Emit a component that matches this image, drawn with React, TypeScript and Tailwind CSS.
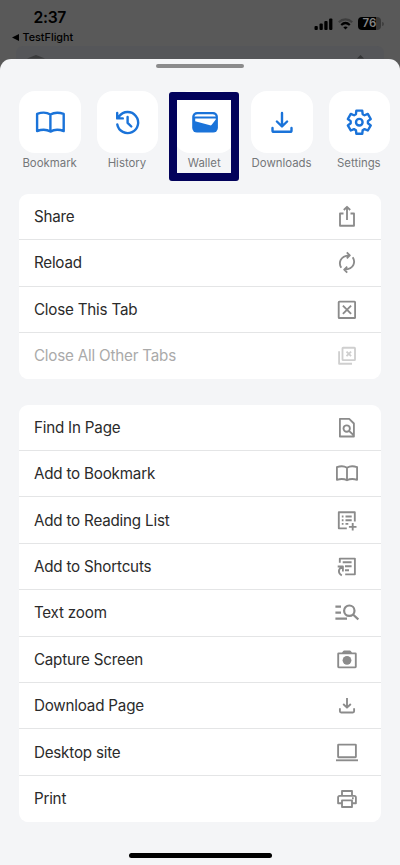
import type { ReactNode } from "react";

const gearPoints = Array.from({ length: 6 }, (_, i) => {
  const base = (i * Math.PI) / 3 - Math.PI / 2;
  return [
    [8.7, -0.4],
    [11.9, -0.25],
    [11.9, 0.25],
    [8.7, 0.4],
  ]
    .map(([r, a]) => `${(16.3 + r * Math.cos(base + a)).toFixed(2)},${(16.2 + r * Math.sin(base + a)).toFixed(2)}`)
    .join(" ");
}).join(" ");

function Big({ children }: { children: ReactNode }) {
  return (
    <svg className="size-8" viewBox="0 0 32 32" fill="none" stroke="#1a73d9" strokeWidth="2.4" strokeLinecap="round" strokeLinejoin="round">
      {children}
    </svg>
  );
}

function Small({ children }: { children: ReactNode }) {
  return (
    <svg className="size-6" viewBox="0 0 24 24" fill="none" stroke="currentColor" strokeWidth="1.85" strokeLinejoin="round">
      {children}
    </svg>
  );
}

const shortcuts: { label: string; icon: ReactNode; marked?: boolean }[] = [
  {
    label: "Bookmark",
    icon: (
      <Big>
        <path d="M16.400 8.600C13 6.400 7.400 6.400 3.100 7.900V25c4.400-1.500 9.900-1.500 13.300.6 3.500-2.100 9-2.100 13.300-.6V7.900C25.400 6.400 19.900 6.400 16.400 8.600ZM16.400 8.600v17" />
      </Big>
    ),
  },
  {
    label: "History",
    icon: (
      <Big>
        <path d="M6.300 18.500A10.500 10.500 0 1 0 8.200 10.300l-1.200 1.900M6.200 7v5.400h5.600M16.600 11v5.800l3.700 3.700" />
      </Big>
    ),
  },
  {
    label: "Wallet",
    marked: true,
    icon: (
      <Big>
        <rect x="3.200" y="6" width="25.700" height="20.600" rx="4.800" fill="#1a73d9" stroke="none" />
        <path d="M5.500 10.400C5.900 8.900 7 8.200 8.500 8.200h15.200c1.500 0 2.600.7 3 2.200Z" fill="#fff" stroke="none" />
        <path d="M6.200 12.500h20c.7 0 .9.600.4 1.200l-3.900 5c-.5.600-1 .8-1.700.6L6.200 15.200Z" fill="#fff" stroke="none" />
      </Big>
    ),
  },
  {
    label: "Downloads",
    icon: (
      <Big>
        <path d="M16 7v13M10.900 15.500 16 20.500l5.100-5M6.500 22v2.400c0 .9.500 1.400 1.400 1.400h16.200c.9 0 1.400-.5 1.400-1.400V22" />
      </Big>
    ),
  },
  {
    label: "Settings",
    icon: (
      <Big>
        <polygon points={gearPoints} />
        <circle cx="16.300" cy="16.200" r="3.300" />
      </Big>
    ),
  },
];

const pageActions: { label: string; icon: ReactNode; disabled?: boolean }[] = [
  {
    label: "Share",
    icon: (
      <Small>
        <path d="M8.500 8.500H5v12.200h14V8.500h-3.500M12 15V1.800M8.800 5 12 1.800 15.200 5" />
      </Small>
    ),
  },
  {
    label: "Reload",
    icon: (
      <Small>
        <path d="M6.300 16.800C3.500 12.500 4.500 5 14.500 4.400M11.800 1.400l3 3-3 3M17.700 6.200C20.500 10.500 19.500 18 9.500 18.600M12.200 21.600l-3-3 3-3" />
      </Small>
    ),
  },
  {
    label: "Close This Tab",
    icon: (
      <Small>
        <rect x="3.700" y="3.600" width="16.400" height="16.400" rx=".6" />
        <path d="m7.900 7.700 8.200 8.200m0-8.200-8.200 8.200" />
      </Small>
    ),
  },
  {
    label: "Close All Other Tabs",
    disabled: true,
    icon: (
      <Small>
        <rect x="7.500" y="3.700" width="12.500" height="12.400" rx=".6" />
        <path d="M4.100 7.200v12.500H17M11.500 7.600l4.600 4.600m0-4.600-4.600 4.600" />
      </Small>
    ),
  },
];

const toolActions: typeof pageActions = [
  {
    label: "Find In Page",
    icon: (
      <Small>
        <path d="M4.900 2.800h9.300l4.700 4.700v13H4.900ZM14 14.800l5 4.700" />
        <circle cx="11.700" cy="12.500" r="3.200" />
      </Small>
    ),
  },
  {
    label: "Add to Bookmark",
    icon: (
      <Small>
        <path d="M12 5.700C9.300 4 5.200 4 1.900 5.100v12.700c3.300-1 7.400-1 10.100.5 2.700-1.500 6.800-1.500 10.100-.5V5.100C18.800 4 14.700 4 12 5.700Zm0 0v12.600" />
      </Small>
    ),
  },
  {
    label: "Add to Reading List",
    icon: (
      <Small>
        <path d="M11.800 19.300h-8v-16h16v9.200M6.800 7.500h1.700M6.800 11.200h1.700M6.800 14.800h1.700M10.500 7.500h6.200M10.500 11.200h6.200M10.500 14.800h2.800M17.700 14v7.600M13.900 17.800h7.600" />
      </Small>
    ),
  },
  {
    label: "Add to Shortcuts",
    icon: (
      <Small>
        <path d="M4.800 7.700V3.600h15.100v15.700h-9.700M7.700 7.200h8.900M10 11.200h6.600M10 15.200h4M2.700 11.500h5.200v5M7.600 11.800C3 13.500 2.600 18 6.800 20.500" />
      </Small>
    ),
  },
  {
    label: "Text zoom",
    icon: (
      <Small>
        <g strokeWidth="2.200">
          <circle cx="14.300" cy="9.700" r="5.200" />
          <path d="m18 13.500 5.300 4.900M.4 5.600h5.600M.4 11.700h5.600M.4 17.700H12" />
        </g>
      </Small>
    ),
  },
  {
    label: "Capture Screen",
    icon: (
      <Small>
        <rect x="3.200" y="5.300" width="17.600" height="14" rx=".5" />
        <path d="M8 4.900 9 3.500h6l1 1.400Z" fill="currentColor" />
        <circle cx="12" cy="12.300" r="4.400" fill="currentColor" stroke="none" />
      </Small>
    ),
  },
  {
    label: "Download Page",
    icon: (
      <Small>
        <path d="M12 4v9.600M8.200 10 12 13.700l3.800-3.700M4.900 14.300v3c0 .8.400 1.200 1.200 1.200h11.800c.8 0 1.200-.4 1.200-1.200v-3" />
      </Small>
    ),
  },
  {
    label: "Desktop site",
    icon: (
      <Small>
        <rect x="3.100" y="3.600" width="17.800" height="12.600" rx=".5" />
        <path d="M1 19.300h22" />
      </Small>
    ),
  },
  {
    label: "Print",
    icon: (
      <Small>
        <path d="M7 8.900V4h10v4.900M7 16.200H3.100v-5.700c0-1 .6-1.600 1.600-1.600h14.600c1 0 1.600.6 1.600 1.600v5.700H17M7 13.300h10V20H7ZM17 11.200h1.700" />
      </Small>
    ),
  },
];

function ActionList({ items }: { items: typeof pageActions }) {
  return (
    <div className="overflow-hidden rounded-[9px] bg-white">
      {items.map((item) => (
        <div
          key={item.label}
          className={`flex h-[46.4px] items-center justify-between border-b border-[#e4e5e6] pt-px pr-[21.9px] pl-[14.5px] last:border-white ${
            item.disabled ? "text-[#cfcfcf]" : "text-[#8b8b8b]"
          }`}
        >
          <span className={`text-[15.2px] leading-5 tracking-[-0.2px] ${item.disabled ? "text-[#aaaaaa]" : "text-[#2b2b2b]"}`}>{item.label}</span>
          {item.icon}
        </div>
      ))}
    </div>
  );
}

export default function App() {
  return (
    <div className="flex h-[865px] w-[400px] flex-col overflow-hidden bg-[#595959] font-[Inter,sans-serif]">
      <header className="flex h-[46px] shrink-0 justify-between pt-2">
        <div className="pl-3">
          <div className="pl-[21.5px] pt-px text-[15.7px] leading-[18px] font-semibold tracking-[-0.3px] text-black">2:37</div>
          <div className="mt-[3px] flex items-center gap-[3.5px] text-[10.8px] leading-[15px] font-medium text-black">
            <svg className="h-[7px] w-[7px]" viewBox="0 0 7 7">
              <path d="M0 3.500 7 0v7Z" />
            </svg>
            TestFlight
          </div>
        </div>
        <div className="flex h-[31px] items-center gap-[5px] pr-[16.5px]">
          <svg className="h-3 w-[19px]" viewBox="0 0 19 12">
            <rect x=".5" y="8" width="3.300" height="4" rx="1" />
            <rect x="5.500" y="5.500" width="3.300" height="6.500" rx="1" />
            <rect x="10.300" y="3" width="3.300" height="9" rx="1" />
            <rect x="15.100" y=".5" width="3.300" height="11.500" rx="1" />
          </svg>
          <svg className="h-3 w-[15px]" viewBox="0 0 15 12" fill="none" strokeWidth="2.200">
            <path d="M.8 4.200C4.700.4 10.300.4 14.200 4.200" stroke="#3d3d3d" />
            <path d="M3.200 7C5.800 4.600 9.200 4.600 11.800 7" stroke="#000" />
            <path d="m7.500 11.500-2.200-2.300c1.300-1.100 3.100-1.100 4.400 0Z" fill="#000" />
          </svg>
          <div className="flex items-center gap-px">
            <div className="flex h-[13px] w-[23px] items-center justify-center overflow-hidden rounded-[4px] bg-linear-to-r from-black from-78% to-[#383838] to-78% text-[11.5px] leading-[13px] font-semibold text-[#858585]">
              76
            </div>
            <div className="h-1 w-[1.5px] rounded-r-full bg-[#404040]" />
          </div>
        </div>
      </header>
      <div className="mx-4 flex h-[12.5px] shrink-0 items-end justify-between overflow-hidden rounded-t-[7px] bg-[#555659] pr-5 pl-[11px]">
        <svg className="h-[3.5px] w-[18px]" viewBox="0 0 18 3.500" fill="#3a3b3c">
          <path d="M0 3.500 9 0l9 3.500Z" />
        </svg>
        <svg className="h-[3.5px] w-[7px]" viewBox="0 0 7 3.500" fill="#343536">
          <path d="M0 3.500 3.500 0 7 3.500Z" />
        </svg>
      </div>
      <main className="flex grow flex-col rounded-t-[11px] bg-[#f4f5f7] px-[19.4px]">
        <div className="mt-[5px] h-1 w-[87.5px] shrink-0 self-center rounded-full bg-[#8b8b8c]" />
        <nav className="mt-[23.8px] flex h-[102.6px] shrink-0 gap-[15.8px]">
          {shortcuts.map((s) => (
            <div key={s.label} className="relative flex w-[61.5px] shrink-0 flex-col items-center">
              {s.marked && <div className="absolute top-[0.7px] -left-[5px] h-[89px] w-[70px] rounded-[3px] border-8 border-[#02025b]" />}
              <div className="flex h-[61.5px] w-[61.5px] shrink-0 items-center justify-center rounded-[16px] bg-white">{s.icon}</div>
              <span className="mt-[3.2px] mr-px text-[11.4px] leading-[15px] whitespace-nowrap text-[#75777a]">{s.label}</span>
            </div>
          ))}
        </nav>
        <ActionList items={pageActions} />
        <div className="h-[25.2px] shrink-0" />
        <ActionList items={toolActions} />
        <div className="mt-[30.5px] h-[5px] w-[143px] shrink-0 self-center rounded-full bg-black" />
      </main>
    </div>
  );
}
